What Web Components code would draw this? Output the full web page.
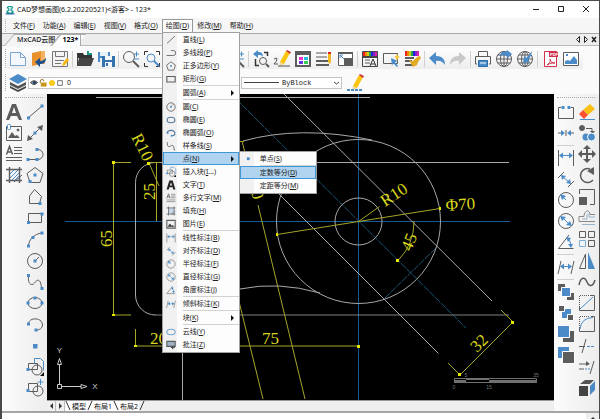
<!DOCTYPE html>
<html lang="zh-CN">
<head>
<meta charset="utf-8">
<title>CAD梦想画图</title>
<style>
  body {
    margin: 0;
    background: #39452a;
    font: 7px/10px "Noto Sans", "Noto Sans CJK SC", sans-serif;
    color: #222;
  }
</style>
</head>
<body>
<cad-window>
  <title-bar slot="top">CAD梦想画图(6.2.20220521)&lt;游客&gt; - 123*</title-bar>

  <menu-bar slot="top">
    <menu-item>文件(<u>F</u>)</menu-item>
    <menu-item>功能(<u>A</u>)</menu-item>
    <menu-item>编辑(<u>E</u>)</menu-item>
    <menu-item>视图(<u>V</u>)</menu-item>
    <menu-item>格式(<u>O</u>)</menu-item>
    <menu-item open>绘图(<u>D</u>)
      <menu-popup slot="popup">
        <menu-entry icon="mLine">直线(<u>L</u>)</menu-entry>
        <menu-entry icon="mPline">多线段(<u>P</u>)</menu-entry>
        <menu-entry icon="mPolygon">正多边形(<u>Y</u>)</menu-entry>
        <menu-entry icon="mRect">矩形(<u>G</u>)</menu-entry>
        <menu-line></menu-line>
        <menu-entry more>圆弧(<u>A</u>)</menu-entry>
        <menu-line></menu-line>
        <menu-entry icon="mCircle">圆(<u>C</u>)</menu-entry>
        <menu-entry icon="mEllipse">椭圆(<u>E</u>)</menu-entry>
        <menu-entry icon="mEllArc">椭圆弧(<u>O</u>)</menu-entry>
        <menu-entry icon="mSpline">样条线(<u>S</u>)</menu-entry>
        <menu-entry more active>点(<u>N</u>)
          <menu-popup slot="popup">
            <menu-entry icon="mPoint">单点(<u>S</u>)</menu-entry>
            <menu-line></menu-line>
            <menu-entry active>定数等分(<u>D</u>)</menu-entry>
            <menu-entry>定距等分(<u>M</u>)</menu-entry>
          </menu-popup>
        </menu-entry>
        <menu-entry icon="insertBlock">插入块(<u>I</u>...)</menu-entry>
        <menu-entry icon="mText">文字(<u>T</u>)</menu-entry>
        <menu-entry icon="mtext">多行文字(<u>M</u>)</menu-entry>
        <menu-entry icon="hatch">填充(<u>H</u>)</menu-entry>
        <menu-entry icon="mImage">图片(<u>E</u>)</menu-entry>
        <menu-line></menu-line>
        <menu-entry icon="dimLinear">线性标注(<u>B</u>)</menu-entry>
        <menu-entry icon="dimAligned">对齐标注(<u>D</u>)</menu-entry>
        <menu-entry icon="dimRadius">半径标注(<u>F</u>)</menu-entry>
        <menu-entry icon="dimDiameter">直径标注(<u>G</u>)</menu-entry>
        <menu-entry icon="dimAngle">角度标注(<u>J</u>)</menu-entry>
        <menu-line></menu-line>
        <menu-entry icon="dimOblique">倾斜标注(<u>K</u>)</menu-entry>
        <menu-line></menu-line>
        <menu-entry more>块(<u>K</u>)</menu-entry>
        <menu-line></menu-line>
        <menu-entry icon="mCloud">云线(<u>Y</u>)</menu-entry>
        <menu-entry icon="mNote">批注(<u>Z</u>)</menu-entry>
      </menu-popup>
    </menu-item>
    <menu-item>修改(<u>M</u>)</menu-item>
    <menu-item>帮助(<u>H</u>)</menu-item>
  </menu-bar>

  <doc-tabs slot="top">
    <doc-tab>MxCAD云图</doc-tab>
    <doc-tab active>123*</doc-tab>
  </doc-tabs>

  <tool-strip slot="top">
    <tool-button icon="fileNew" label="新建"></tool-button>
    <tool-button icon="fileOpen" label="打开"></tool-button>
    <tool-button icon="saveEdit" label="保存"></tool-button>
    <tool-sep></tool-sep>
    <tool-button icon="folder" label="打开目录"></tool-button>
    <tool-button icon="saveAll" label="全部保存"></tool-button>
    <tool-sep></tool-sep>
    <tool-button icon="zoomPm" label="缩放"></tool-button>
    <tool-button icon="zoomWin" label="窗口缩放"></tool-button>
    <tool-button icon="zoomPm" label="放大"></tool-button>
    <tool-button icon="zoomPm" label="缩小"></tool-button>
    <tool-button icon="zoomWin" label="全图"></tool-button>
    <tool-button icon="zoomPm" label="实时缩放"></tool-button>
    <tool-sep></tool-sep>
    <tool-button icon="zoomPrev" label="上一视图"></tool-button>
    <tool-button icon="pencil" label="编辑"></tool-button>
    <tool-button icon="colors" label="颜色"></tool-button>
    <tool-button icon="lineEdit" label="线型"></tool-button>
    <tool-button icon="viewScale" label="比例"></tool-button>
    <tool-sep></tool-sep>
    <tool-button icon="textStyle" label="文字样式"></tool-button>
    <tool-button icon="quickPick" label="快速选择"></tool-button>
    <tool-button icon="matchProp" label="格式刷"></tool-button>
    <tool-sep></tool-sep>
    <tool-button icon="undo" label="撤销"></tool-button>
    <tool-button icon="redo" label="重做"></tool-button>
    <tool-sep></tool-sep>
    <tool-button icon="print" label="打印"></tool-button>
    <tool-button icon="webUp" label="上传"></tool-button>
    <tool-button icon="webDown" label="下载"></tool-button>
    <tool-sep></tool-sep>
    <tool-button icon="pdf" label="导出PDF"></tool-button>
    <tool-button icon="exportImg" label="导出图片"></tool-button>
  </tool-strip>

  <tool-strip slot="top" plain>
    <tool-button icon="layers" label="图层"></tool-button>
    <layer-select></layer-select>
    <linetype-select></linetype-select>
    <tool-button icon="pencilLine" label="线型管理"></tool-button>
  </tool-strip>

  <side-panel slot="left">
    <tool-button slot="first" icon="textA" label="文字"></tool-button>
    <tool-button slot="first" icon="picture" label="图片"></tool-button>
    <tool-button slot="first" icon="mtext" label="多行文字"></tool-button>
    <tool-button slot="first" icon="hatch" label="填充"></tool-button>
    <tool-button slot="second" icon="line" label="直线"></tool-button>
    <tool-button slot="second" icon="xline" label="构造线"></tool-button>
    <tool-button slot="second" icon="pline" label="多线段"></tool-button>
    <tool-button slot="second" icon="polygon" label="正多边形"></tool-button>
    <tool-button slot="second" icon="shape" label="多边形"></tool-button>
    <tool-button slot="second" icon="rect" label="矩形"></tool-button>
    <tool-button slot="second" icon="arc" label="圆弧"></tool-button>
    <tool-button slot="second" icon="circle" label="圆"></tool-button>
    <tool-button slot="second" icon="spline" label="样条线"></tool-button>
    <tool-button slot="second" icon="ellipse" label="椭圆"></tool-button>
    <tool-button slot="second" icon="ellArc" label="椭圆弧"></tool-button>
    <tool-button slot="second" icon="point" label="点"></tool-button>
    <tool-button slot="second" icon="insertBlock" label="插入块"></tool-button>
    <tool-button slot="second" icon="makeBlock" label="创建块"></tool-button>
  </side-panel>

  <drawing-view></drawing-view>
  <sheet-tabs slot="sheets"></sheet-tabs>

  <side-panel slot="right">
    <tool-button slot="first" icon="breakPt" label="打断"></tool-button>
    <tool-button slot="first" icon="join" label="合并"></tool-button>
    <tool-sep slot="first" across></tool-sep>
    <tool-button slot="first" icon="dimLinear" label="线性标注"></tool-button>
    <tool-button slot="first" icon="dimAligned" label="对齐标注"></tool-button>
    <tool-button slot="first" icon="dimRadius" label="半径标注"></tool-button>
    <tool-button slot="first" icon="dimDiameter" label="直径标注"></tool-button>
    <tool-button slot="first" icon="dimAngle" label="角度标注"></tool-button>
    <tool-sep slot="first" across></tool-sep>
    <tool-button slot="first" icon="dimOblique" label="倾斜标注"></tool-button>
    <tool-sep slot="first" across></tool-sep>
    <tool-button slot="first" icon="order1" label="前置"></tool-button>
    <tool-button slot="first" icon="order2" label="后置"></tool-button>
    <tool-button slot="first" icon="order3" label="置于对象之上"></tool-button>
    <tool-button slot="first" icon="order4" label="置于对象之下"></tool-button>
    <tool-button slot="second" icon="erase" label="删除"></tool-button>
    <tool-button slot="second" icon="copy" label="复制"></tool-button>
    <tool-button slot="second" icon="move" label="移动"></tool-button>
    <tool-button slot="second" icon="rotate" label="旋转"></tool-button>
    <tool-button slot="second" icon="scale" label="缩放"></tool-button>
    <tool-button slot="second" icon="offset" label="偏移"></tool-button>
    <tool-button slot="second" icon="array" label="阵列"></tool-button>
    <tool-button slot="second" icon="mirror" label="镜像"></tool-button>
    <tool-button slot="second" icon="wave" label="光顺"></tool-button>
    <tool-button slot="second" icon="chamfer" label="倒角"></tool-button>
    <tool-button slot="second" icon="fillet" label="圆角"></tool-button>
    <tool-button slot="second" icon="trim" label="修剪"></tool-button>
    <tool-button slot="second" icon="extend" label="延伸"></tool-button>
    <tool-button slot="second" icon="explode" label="分解"></tool-button>
  </side-panel>
</cad-window>

<script>
// shared icon colours
const G = "#5c5c5c";
const B = "#4b8cc8";

// small blue grip square centred on x,y
const dot = (x, y) => `<rect x="${x - 1.5}" y="${y - 1.5}" width="3" height="3" fill="${B}" stroke="none"/>`;
const fill = (d, c = G) => `<path d="${d}" fill="${c}" stroke="none"/>`;
const blue = (d) => `<path d="${d}" stroke="${B}"/>`;
const pen = `<path d="M7 12 13 1l4 2-6 11-4 2z" fill="#fbc40e" stroke="none"/><path d="M13 1l1-1 4 2-1 2z" fill="#c8323c" stroke="none"/><path d="M7 12l4 2-5 3z" fill="#f0d9a8" stroke="none"/>`;
const rainbow = ["#e22", "#e80", "#cc2", "#2a4", "#22d", "#82c", "#d2a"]
  .map((c, i) => `<rect x="${2 + i * 2}" y="1" width="2" height="5" fill="${c}" stroke="none"/>`).join("");
const globe = `<circle cx="9" cy="9" r="7.5"/><ellipse cx="9" cy="9" rx="3.5" ry="7.5"/><path d="M9 1.5v15M1.5 9h15M3 5h12M3 13h12"/>`;

const icons = {
  logo: fill("M5 2h8l2 3-3 3 4 4-2 4H4l-2-4 4-4-3-3z", "#1a9c94") + `<path d="M6 5h6M6 12h6M9 4v10" stroke="#fff" stroke-width="2"/>` + fill("M1 15h16v2H1z", "#2b5fa5"),
  fileNew: `<path d="M1.500 2.500h10l5 5v8h-15z" fill="#f4f8fd" stroke="#7ba4d0"/><path d="M11.500 2.500v5h5" stroke="#7ba4d0"/>`,
  fileOpen: fill("M2 3l9-2v13l-9 2z", "#e8922c") + fill("M11 1h4v13h-4z", "#f3b465") + fill("M16 8c0 5-3 6-6 6v3l-5-5 5-4v3c3 0 4-1 6-3z", "#1d4f8c"),
  saveEdit: `<path d="M1.500 1.500h15v15h-15z" stroke="#777" fill="#f4f4f4"/><path d="M4.500 1.500v5h9v-5M4 10.500h9M4 13.500h6" stroke="#777"/><path d="M11 16l1-3 4-5 2 2-4 5z" fill="#f6b50e" stroke="none"/>`,
  folder: fill("M1 3h6l1 2h8v3H1z", "#333") + fill("M11 1h2v2h3v2h-5z", "#1b9a8a") + fill("M3 8h15l-3 8H1z", "#444") + fill("M1 5h1v11H1z", "#444"),
  saveAll: fill("M1 2h12v10H1z", B) + fill("M3 2h8v4H3zM3 8h5v4H3z", "#e8f0f8") + fill("M5 6h13v11H5z", "#3573ae") + fill("M8 6h7v4H8zM8 12h7v5H8z", "#f2f6fa") + fill("M9 13h2v3H9z", "#3573ae"),
  zoomPm: `<circle cx="7" cy="7" r="5.500"/><path d="M11 11l6 6" stroke-width="2"/><path d="M12 4h5M14.500 1.500v5M12 9h5" stroke="${B}"/>`,
  zoomWin: `<path d="M1.500 5V1.500H5M13 1.500h3.500V5M16.500 13v3.500H13M5 16.500H1.500V13" stroke="#333"/><circle cx="8" cy="8" r="4" stroke="${B}"/><path d="M11 11l5 5" stroke="${B}" stroke-width="2"/>`,
  zoomPrev: fill("M1 4l5-4v2c4 0 5 2 5 5-1-2-3-2-5-2v3z", B) + `<path d="M12 2.500h3.500V6M3.500 9v6.500H7" stroke="#333" stroke-width="1.500"/><circle cx="11" cy="11" r="3.500"/><path d="M14 14l3 3" stroke-width="2"/>`,
  pencil: pen + `<path d="M1 9q3-2 3 0t-3 5h4M5 16h12" stroke="#555"/>`,
  colors: `<rect x="2" y="2" width="14" height="14" fill="#fff" stroke-width="2"/>` + fill("M2 2h14v3H2z") + fill("M5 7h4v3H5z", "#e3c") + fill("M10 7h4v3h-4z", "#22b8e0") + fill("M5 11h4v3H5z", "#63d") + fill("M10 11h4v3h-4z", "#3c5"),
  lineEdit: `<path d="M1 3h11M1 7h11M1 15h13" stroke-width="1"/><path d="M1 11h12" stroke-width="2"/><path d="M1 15h13" stroke-width="2"/>` + fill("M13 4h3v8l-1.500 2L13 12z", "#f3bb23") + fill("M13 2h3v2h-3z", "#d22"),
  viewScale: `<path d="M2.500 2.500h14v13h-14z" fill="#fff"/>` + fill("M8 8h9v8H8z") + blue("M4 5l4 4M4 8V5h3") + fill("M2 2h15v2H2z"),
  textStyle: rainbow + `<path d="M1.500 1.500h15v15h-15z" stroke="#444"/>` + fill("M1 6h16v2H1z", "#444") + `<path d="M4 10h5M4 13h5"/><path d="M9 16l3-7 3 7M10 14h4" stroke="#333"/>`,
  quickPick: `<path d="M1.500 3.500h14v10h-14z"/>` + fill("M9 8l7 3-3 1 3 4-1 1-4-4-1 3z", B) + fill("M15 4l1 2 2 1-2 1-1 3-1-3-2-1 2-1z", "#f7c534"),
  matchProp: rainbow + `<path d="M2 8h9M2 11h7M2 15h8" stroke-width="2"/>` + fill("M6 10l4 1 4-4 3-1 1 2-3 4-1 3-4 2z", "#e3aa24"),
  undo: fill("M1 8l7-6v4c6 0 9 3 9 9-2-3-5-5-9-4v4z", B),
  redo: fill("M17 8l-7-6v4c-6 0-9 3-9 9 2-3 5-5 9-4v4z", "#c9c9c9"),
  print: `<path d="M4.500 6V1.500h9V6M3 14H1.500V6.500h15V14H15"/><path d="M4.500 10.500h9v6h-9z" fill="${B}" stroke="#2f6da8"/><path d="M6 13h6" stroke="#fff"/>`,
  webUp: globe + fill("M4 6c2-4 5-5 7-4l1-2 5 4-4 4-1-2c-3-1-5-1-8 0z", B),
  webDown: globe + fill("M16 1c-1 5-2 7-4 9l2 2-7 1 1-7 2 2c2-2 4-4 6-7z", B),
  pdf: `<path d="M3.500 1.500h12v15h-12z" fill="#fff" stroke="#cf2f4b"/>` + fill("M8 2h9v5H8z", "#cf2f4b") + `<text x="9" y="6" font-size="4" font-weight="bold" fill="#fff" stroke="none">PDF</text><path d="M6 15c3-2 4-4 3-6 0 3 3 4 5 4-3 0-5 0-8 2" stroke="#cf2f4b"/>`,
  exportImg: `<path d="M1.500 2.500h15v13h-15z" fill="#fff"/><rect x="4" y="4" width="2" height="2" fill="${B}" stroke="none"/>` + fill("M3 14v-3l3-1 2 1 4-5 3 4v4z", B),
  layers: fill("M1 12l8 4 8-4v2l-8 4-8-4z", "#444") + fill("M1 8l8 4 8-4v3l-8 4-8-4z", "#555") + fill("M0 5l9-5 9 5-9 5z", B),
  pencilLine: pen + `<path d="M1 16h16" stroke="${B}" stroke-width="2" stroke-dasharray="3 1"/>`,

  // draw
  textA: fill("M1 17L7 1h4l6 16h-3l-2-4H6l-2 4zM7 10h4L9 4z", "#5c5c5c"),
  picture: `<path d="M1.500 2.500h15v14h-15z"/><circle cx="13" cy="6" r="1" fill="${G}"/>` + fill("M3 14l4-6 3 4 2-1 3 3z") + `<rect x="2.500" y=".5" width="3" height="5" rx="1" stroke="${B}" fill="#fff"/>`,
  mtext: `<path d="M1.500 9.500l3-8 3 8M3 7h4" stroke-width="1.500"/><path d="M9 2.500h8M9 5.500h8M9 8.500h8M1 12.500h16M1 15.500h16"/>`,
  hatch: `<path d="M4.500 1v16M14.500 1v16M1 3.500h16M1 14.500h16" stroke-width="1.400"/><path d="M5 8l4-4M5 12l8-8M7 14l7-7M10 14l4-4" stroke="${B}"/><path d="M9 16l8-7"/>`,
  line: `<path d="M2 15L16 3"/>` + dot(2.5, 15) + dot(16, 3),
  xline: `<path d="M3 15L15 3"/>` + fill("M1 17l1-6 5 4zM17 1l-1 6-5-4z") + dot(9, 9),
  pline: `<path d="M2 14.500h10a5 5 0 0 0 0-10"/>` + dot(2, 14.5) + dot(11, 14.5) + dot(11, 4.5),
  polygon: `<path d="M9 1.500l8 6-3 9H4l-3-9z"/>` + dot(9, 9) + dot(4, 15.5),
  shape: `<path d="M3.500 8l5-6.500 7 7-2 7h-10z"/>` + dot(14, 15.5),
  rect: `<path d="M2.500 4.500h13v9h-13z"/>` + dot(2.5, 13.5) + dot(16, 5),
  arc: `<path d="M2.500 16C3 9 8 4 16 3"/>` + dot(2.5, 16) + dot(7, 7.5) + dot(16, 3),
  circle: `<circle cx="9" cy="9" r="7.500"/><path d="M9 9l4-4"/>` + dot(9, 9),
  spline: `<path d="M2.500 3c-1 9 4 10 6 7s6-6 7 5"/>` + dot(2.5, 2.5) + dot(16, 15.5),
  ellipse: `<ellipse cx="9" cy="9" rx="7" ry="5.500"/>` + dot(2, 9) + dot(16, 9) + dot(9, 4),
  ellArc: `<path d="M2.500 9c0-7 14-7 14 1 0 3-3 5-6 5"/>` + dot(2.5, 9) + dot(10, 15),
  point: `<rect x="7" y="7" width="4.500" height="4.500" fill="${B}" stroke="none"/>`,
  insertBlock: `<path d="M8.500 5V.5h6l3 3v9" stroke="${B}"/><path d="M2.500 5.500h9v6h-9z"/><circle cx="11" cy="12" r="5"/>` + dot(2, 11.5) + fill("M18 14v4h-4z", "#111"),
  makeBlock: `<path d="M2.500 4.500h9v8h-9z"/><circle cx="12" cy="12" r="5"/>` + blue("M14.500 0v6M11.500 3h6") + dot(2, 11.5),

  // modify and dimension
  breakPt: `<path d="M4 4.500H1.500v11h15v-11H14"/>` + dot(6, 4.5) + dot(12, 4.5),
  join: `<path d="M1 9h4M13 9h4"/>` + fill("M4 6l4 3-4 3zM14 6l-4 3 4 3z", B) + `<path d="M9 6v6"/>`,
  dimLinear: `<path d="M1.500 1v16M16.500 1v16"/>` + blue("M3 6.500h12") + fill("M2 6.500l4-3v6zM16 6.500l-4-3v6z", B),
  dimAligned: `<path d="M1 8l6-6M11 17l6-6"/>` + blue("M5 6l8 7") + fill("M4 5l5 1-4 4zM14 14l-5-1 4-4z", B),
  dimRadius: `<circle cx="9" cy="9" r="7.500"/>` + blue("M9 9L5 5") + fill("M3 3l6 2-4 4z", B),
  dimDiameter: `<circle cx="9" cy="9" r="7.500"/>` + blue("M5 5l8 8") + fill("M3 4l6 1-4 4zM15 14l-6-1 4-4z", B),
  dimAngle: `<path d="M12 2L1.500 15.500h15"/>` + blue("M11 5q3 4 3 8") + fill("M9 4l5 1-3 4zM14 15l-3-4h5z", B),
  dimOblique: `<path d="M4 3L1 16M17 3l-3 13"/>` + blue("M5 8.500h9") + fill("M3 8.500l4-3v6zM15 8.500l-4-3v6z", B),
  order1: fill("M1 1h7v7H1zM10 10h7v7h-7z") + `<path d="M4.500 4.500h9v9h-9z" fill="${B}" stroke="#fff"/>`,
  order2: fill("M5 5h9v9H5z", B) + `<path d="M1.500 1.500h6v6h-6zM10.500 10.500h6v6h-6z" fill="${G}" stroke="#fff"/>`,
  order3: fill("M6 6h11v11H6z") + `<path d="M.5.5h12v12H.5z" fill="${B}" stroke="#fff"/>`,
  order4: fill("M1 1h11v11H1z", B) + `<path d="M5.500 5.500h12v12h-12z" fill="${G}" stroke="#fff"/>`,
  erase: fill("M5 7l7-6 5 5-7 6z", "#f9c013") + fill("M5 7l5 5-4 4-5-5z", "#fa5130") + blue("M2 16.500h15"),
  copy: `<circle cx="4" cy="4" r="2.500" fill="${G}"/><path d="M8 4.500h6v4"/>` + fill("M12 7h5l-2.500 3z") + `<circle cx="8" cy="13" r="3.500" fill="${B}" stroke="none"/><circle cx="13.500" cy="13" r="4" fill="${B}" stroke="#fff"/>`,
  move: `<path d="M9 3v12M3 9h12" stroke-width="2"/>` + fill("M9 0l4 4H5zM9 18l4-4H5zM0 9l4-4v8zM18 9l-4-4v8z"),
  rotate: `<path d="M12 3a7 7 0 1 0 3 11" stroke-width="1.500"/>` + fill("M16 1v8l-7-4z"),
  scale: `<path d="M1.500 6V1.500h15v15H12"/>` + fill("M1 9h8v8H1z"),
  offset: `<path d="M1 12.500V7.500h5c0-7 6-7 6-2h5M1 12.500h16" stroke="#888"/><path d="M4 10h5V6c1-2 2-1 2 0v2h6M4 15.500h13" stroke="#9ab4cb"/>`,
  array: `<path d="M1.500 1.500h6v6h-6zM10.500 1.500h6v6h-6zM10.500 10.500h6v6h-6z"/><path d="M1.500 10.500h6v6h-6z" stroke="#7fb0d8"/>`,
  mirror: `<path d="M7.500 2v14.500h-6z"/>` + fill("M10 0l7 17h-7z", B),
  wave: `<path d="M1 12c2-9 6-8 8-3s6 5 8-2" stroke-width="1.500"/>`,
  chamfer: `<path d="M12 1.500h4.500v15h-15V13"/><path d="M1.500 13V1.500H12" stroke-dasharray="1 1"/>` + blue("M2 15L15 3"),
  fillet: `<path d="M13 1.500h3.500v15h-15V13"/><path d="M1.500 13V1.500H12" stroke-dasharray="1 1"/>` + blue("M2 14Q3 3 15 2.500"),
  trim: `<path d="M1 9.500h6M4 16L8 2"/><path d="M9 9.500h8" stroke="${B}" stroke-dasharray="3 1"/>`,
  extend: `<path d="M1 6h9M1 11h5M12 16l4-13"/>` + fill("M8 3l4 3-4 2z") + `<path d="M7 11h6" stroke="${B}" stroke-dasharray="2 1"/>`,
  explode: fill("M1 7h9v10H1z", "#444") + fill("M2 5l5-4h9l-4 4z", "#555") + fill("M12 7l5-5v9l-5 5z", B),

  // menu versions, lighter than the panel ones
  mLine: `<path d="M2 15L16 2" stroke-width="1.500"/>`,
  mPline: `<path d="M1 13.500h12a4 4 0 0 0 0-9H9" stroke-width="1.500"/>`,
  mPolygon: `<path d="M9 1.500l8 6-3 9H4l-3-9z" stroke-width="1.500"/>` + dot(9, 9),
  mRect: `<path d="M1.500 4.500h15v10h-15z" stroke-width="2"/>`,
  mCircle: `<circle cx="9" cy="9" r="7.500" stroke-width="1.500"/><path d="M8 9l5-5"/>` + dot(9, 9),
  mEllipse: `<ellipse cx="9" cy="9" rx="7" ry="5" stroke="#58779a" stroke-width="2"/>`,
  mEllArc: `<path d="M2 9c0-7 15-6 14 1 0 3-3 4-5 4" stroke="#58779a" stroke-width="2"/>` + dot(10, 14) + dot(3, 9),
  mSpline: `<path d="M2.500 2c-1 9 3 9 6 7s6-2 6 7h2" stroke-width="1.500"/>`,
  mPoint: `<rect x="7" y="6" width="5" height="5" fill="${B}" stroke="none"/>`,
  mText: fill("M1 17L6 1h6l5 16h-4l-1-4H6l-1 4zM7 10h4L9 4z", "#222"),
  mImage: `<path d="M1.500 2.500h15v14h-15z" stroke-width="2"/>` + fill("M3 14l4-6 3 4 2-1 3 3z", "#333"),
  mCloud: `<ellipse cx="9" cy="9" rx="7.500" ry="5" stroke="#7ba5cf" stroke-width="2"/>`,
  mNote: `<path d="M1.500 2.500h15v9h-15z" fill="#9db2c6" stroke-width="2"/>` + fill("M8 12h8v2h-3v3z", "#333"),

  // layer state
  eye: `<path d="M1 8q8-8 16 0q-8 9-16 0z" fill="#8fa9c4" stroke="#333" stroke-width="2"/><circle cx="10" cy="8" r="3.500" fill="#1d3c63"/>`,
  lock: `<path d="M3 9V5q0-4 4-4t4 4" stroke="#8a6a16" stroke-width="2"/>` + fill("M4 8h13v9H4z", "#c8961e"),
  sun: `<circle cx="9" cy="9" r="6" fill="#fcd116" stroke="#f0a800" stroke-width="2" stroke-dasharray="3 2"/>`,
  box: `<path d="M2 2h14v14H2z" fill="#fff" stroke="#333" stroke-width="2"/>`,
};

function define(name, html, setup) {
  const template = document.createElement("template");
  template.innerHTML = html;
  customElements.define(name, class extends HTMLElement {
    constructor() {
      super();
      this.attachShadow({ mode: "open" });
      this.shadowRoot.appendChild(template.content.cloneNode(true));
      if (setup) setup(this, this.shadowRoot);
    }
  });
}

define("cad-icon", `
  <style>
    :host { display: block; width: 18px; height: 18px; flex: none; }
    svg { display: block; width: 100%; height: 100%; overflow: visible; }
  </style>
  <svg viewBox="0 0 18 18" fill="none" stroke="${G}" aria-hidden="true"></svg>
`, (el, root) => {
  root.querySelector("svg").innerHTML = icons[el.getAttribute("name")] || "";
});

define("cad-window", `
  <style>
    :host {
      display: flex;
      flex-direction: column;
      min-height: 100vh;
      box-sizing: border-box;
      border: solid #4a4b48;
      border-width: 1px 1px 0 2px;
      background: #f6f6f6;
    }
    .work { display: flex; flex: 1; }
    .view { display: flex; flex-direction: column; flex: 1; min-width: 0; }
    .command {
      display: flex;
      justify-content: flex-end;
      height: 6px;
      overflow: hidden;
      border-top: 2px solid #a5a5a5;
      background: #fff;
    }
    .command button { width: 13px; height: 12px; padding: 0; border: 0; background: #eee; }
    .command svg { display: block; margin: 1px auto; }
  </style>
  <slot name="top"></slot>
  <div class="work">
    <slot name="left"></slot>
    <div class="view">
      <slot></slot>
      <slot name="sheets"></slot>
    </div>
    <slot name="right"></slot>
  </div>
  <div class="command">
    <button aria-label="向上滚动"><svg width="8" height="5" fill="none" stroke="#444" stroke-width="1.500"><path d="M1 4l3-3 3 3"/></svg></button>
  </div>
`);

define("title-bar", `
  <style>
    :host { display: flex; align-items: center; height: 17px; padding-left: 3px; background: #fff; color: #111; }
    cad-icon { width: 10px; height: 10px; margin-right: 2px; }
    .name { flex: 1; white-space: nowrap; }
    button { width: 25px; height: 17px; padding: 0; border: 0; background: none; }
    svg { display: block; margin: auto; }
  </style>
  <cad-icon name="logo"></cad-icon>
  <span class="name"><slot></slot></span>
  <button aria-label="最小化"><svg width="7" height="7" stroke="#222"><path d="M0 3.500h6"/></svg></button>
  <button aria-label="最大化"><svg width="7" height="7" fill="none" stroke="#222"><path d="M.5.5h5v5h-5z"/></svg></button>
  <button aria-label="关闭"><svg width="7" height="7" stroke="#222"><path d="M0 0l6 6M6 0L0 6"/></svg></button>
`);

define("menu-bar", `
  <style>
    :host { display: flex; height: 15px; box-sizing: border-box; padding: 1px 0 1px 3px; background: #f6f6f6; }
    .grip { width: 3px; border-left: 1px dotted #b5b5b5; }
  </style>
  <span class="grip"></span>
  <slot></slot>
`);

define("menu-item", `
  <style>
    :host { display: block; position: relative; white-space: nowrap; }
    button {
      height: 13px;
      padding: 0 3px;
      border: 1px solid transparent;
      border-bottom: 0;
      background: none;
      font: inherit;
      color: inherit;
    }
    :host([open]) button { background: #fdfdfd; border-color: #999; }
    ::slotted(menu-popup) { top: 100%; left: 0; }
  </style>
  <button><slot></slot></button>
  <slot name="popup"></slot>
`);

define("menu-popup", `
  <style>
    :host {
      display: block;
      position: absolute;
      z-index: 5;
      width: 76px;
      padding-bottom: 1px;
      border: 1px solid #a0a0a0;
      background: linear-gradient(90deg, #f1f1f1 14px, #fdfdfd 14px);
    }
  </style>
  <slot></slot>
`);

define("menu-entry", `
  <style>
    :host { display: block; position: relative; height: 13px; white-space: nowrap; }
    button {
      display: flex;
      align-items: center;
      width: 100%;
      height: 13px;
      padding: 0 4px 0 2px;
      border: 1px solid transparent;
      background: none;
      font: inherit;
      color: inherit;
      text-align: left;
    }
    cad-icon { width: 10px; height: 10px; margin-right: 7px; }
    .text { flex: 1; }
    .arrow { display: none; }
    :host([more]) .arrow { display: block; fill: #111; }
    :host([active]) button { background: #b0d3f0; border-color: #3f97d6; }
    ::slotted(menu-popup) { top: -1px; left: 100%; }
  </style>
  <button><span class="text"><slot></slot></span><svg class="arrow" width="3" height="6"><path d="M0 0l3 3-3 3z"/></svg></button>
  <slot name="popup"></slot>
`, (el, root) => {
  const icon = document.createElement("template");
  icon.innerHTML = `<cad-icon name="${el.getAttribute("icon") || ""}"></cad-icon>`;
  root.querySelector("button").prepend(icon.content);
});

define("menu-line", `
  <style>:host { display: block; height: 1px; margin-left: 20px; background: #d2d2d2; }</style>
`);

define("doc-tabs", `
  <style>
    :host {
      display: flex;
      align-items: flex-end;
      height: 13px;
      box-sizing: border-box;
      padding: 0 2px 0 7px;
      border-top: 1px solid #a8a8a8;
      border-bottom: 1px solid #bbb;
      background: #ededed;
    }
    nav { display: flex; gap: 2px; margin-left: auto; }
    nav button { width: 6px; height: 11px; padding: 0; border: 0; background: none; }
    svg { display: block; fill: none; stroke: #222; }
  </style>
  <slot></slot>
  <nav>
    <button aria-label="上一个"><svg width="6" height="7"><path d="M4.500.500v6l-3-3z"/></svg></button>
    <button aria-label="下一个"><svg width="6" height="7"><path d="M1.500.500v6l3-3z"/></svg></button>
    <button aria-label="关闭标签"><svg width="6" height="7" stroke-width="1.500"><path d="M1 1l4 5M5 1L1 6"/></svg></button>
  </nav>
`);

define("doc-tab", `
  <style>
    :host { display: block; position: relative; z-index: 0; height: 11px; font-weight: 500; }
    button { height: 11px; padding: 0 1px 0 8px; border: 0; background: none; font: inherit; line-height: 10px; color: inherit; }
    :host([active]) button { padding: 0 3px 0 6px; }
    :host::before {
      content: "";
      position: absolute;
      z-index: -1;
      inset: 0 0 -1px 0;
      border: solid #aaa;
      border-width: 1px 1px 0 1px;
      background: #f4f4f4;
      transform: skewX(-40deg);
      transform-origin: left;
    }
    :host([active]) { font-weight: bold; color: #000; }
    :host([active])::before { background: #fdfdfd; border-right: 0; }
    :host([active])::after {
      content: "";
      position: absolute;
      z-index: -1;
      inset: 0 0 -1px 8px;
      border: solid #aaa;
      border-width: 1px 1px 0 0;
      background: #fdfdfd;
    }
  </style>
  <button><slot></slot></button>
`);

define("tool-strip", `
  <style>
    :host { display: flex; align-items: center; height: 25px; padding: 0 2px; background: #fafafa; }
    :host([plain]) { height: 23px; }
    .grip { align-self: stretch; margin: 3px 1px 3px 1px; border-left: 1px dotted #aaa; }
    .tools { display: flex; align-items: center; height: 21px; padding-right: 2px; background: linear-gradient(#fdfdfd, #eeeeee); }
    :host([plain]) .tools { background: none; }
  </style>
  <span class="grip"></span>
  <div class="tools"><slot></slot></div>
`);

define("tool-button", `
  <style>
    :host { display: block; width: 21px; }
    button {
      display: flex;
      align-items: center;
      justify-content: center;
      width: 100%;
      height: 21px;
      padding: 0;
      border: 0;
      background: none;
    }
  </style>
  <button></button>
`, (el, root) => {
  const button = root.querySelector("button");
  button.setAttribute("aria-label", el.getAttribute("label"));
  button.innerHTML = `<cad-icon name="${el.getAttribute("icon")}"></cad-icon>`;
});

define("tool-sep", `
  <style>
    :host { display: flex; justify-content: center; align-items: center; width: 4px; height: 18px; }
    :host([across]) { width: 21px; height: 4px; }
    i { width: 1px; height: 16px; background: #d0d0d0; }
    :host([across]) i { width: 17px; height: 1px; }
  </style>
  <i></i>
`);

const comboStyle = `
  :host { display: flex; align-items: center; height: 12px; box-sizing: border-box; border: 1px solid #c4c4c4; background: #fff; }
  label { display: flex; align-items: center; flex: 1; }
  select { flex: 1; min-width: 0; height: 10px; padding: 0; border: 0; appearance: none; background: none; font: inherit; color: #222; }
  svg { flex: none; fill: none; stroke: #444; }
`;

define("layer-select", `
  <style>
    ${comboStyle}
    :host { width: 150px; padding: 0 3px 0 1px; }
    label { gap: 1px; }
    cad-icon { width: 8px; height: 8px; }
    .box { width: 6px; height: 6px; }
    select { margin-left: 3px; }
  </style>
  <label aria-label="当前图层">
    <cad-icon name="eye"></cad-icon><cad-icon name="lock"></cad-icon><cad-icon name="sun"></cad-icon><cad-icon class="box" name="box"></cad-icon>
    <select><option>0</option></select>
  </label>
  <svg width="5" height="4"><path d="M0 1l2.500 2L5 1"/></svg>
`);

define("linetype-select", `
  <style>
    ${comboStyle}
    :host { width: 101px; margin: 0 2px 0 63px; padding: 0 2px; }
    label { gap: 3px; }
    select { font-family: "Liberation Mono", monospace; }
  </style>
  <label aria-label="线型">
    <svg width="35" height="1"><path d="M0 .5h35"/></svg>
    <select><option>ByBlock</option></select>
  </label>
  <svg width="5" height="4"><path d="M0 1l2.500 2L5 1"/></svg>
`);

define("side-panel", `
  <style>
    :host { display: block; width: 45px; padding: 3px 2px 12px 1px; box-sizing: border-box; background: linear-gradient(90deg, #fbfbfb, #ededed); }
    .grip { margin: 0 2px; height: 3px; border-top: 1px dotted #aaa; }
    .cols { display: flex; }
    .col { display: flex; flex-direction: column; width: 21px; }
    .second { display: grid; grid-auto-rows: 1fr; height: 298px; }
  </style>
  <div class="grip"></div>
  <div class="cols">
    <div class="col"><slot name="first"></slot></div>
    <div class="col second"><slot name="second"></slot></div>
  </div>
`);

define("drawing-view", `
  <style>
    :host { display: block; flex: 1; min-height: 0; overflow: hidden; background: #000; }
    svg { display: block; width: 100%; height: 306px; }
    g { fill: none; }
    .w { stroke: #a8a8a8; }
    .b { stroke: #17598f; }
    .dash { stroke: #1b5672; stroke-dasharray: 7 1; }
    .y { stroke: #a5a52a; }
    .tick { fill: #e6e600; }
    .dim { fill: #d8d81c; font: 17px "Liberation Serif", serif; }
    .gray { stroke: #707070; }
    .small { fill: #777; font: 5px "Liberation Sans", sans-serif; text-anchor: middle; }
    .ucs { stroke: #ccc; }
    .axis { fill: #ccc; font: 8px "Liberation Sans", sans-serif; text-anchor: middle; }
  </style>
  <svg viewBox="47 94 507 306" preserveAspectRatio="xMinYMin slice">
    <g class="b">
      <path d="M358.500 94v306M65 221.500h445"/>
      <path class="dash" d="M231 94L466 328M385 298l52-51"/>
    </g>
    <g class="w">
      <path d="M96 97.500h274M509 162.500H155.500a20 20 0 0 0-20 20V295a20 20 0 0 0 20 20M182.500 315v85"/>
      <path d="M155 315h354" stroke="#808080"/>
      <circle cx="358.500" cy="221.500" r="82"/>
      <circle cx="358.500" cy="221.500" r="23.500"/>
      <path d="M243 141Q300 125 372 140M240 289Q278 281 320 293"/>
      <path d="M284 94L492 301M200 115L438.500 353.500"/>
    </g>
    <g class="y">
      <path d="M131 162.500h-17.500V315H131M150 162.500h10M156.500 162v59"/>
      <path d="M149 163l10 23M358.500 221.500l21-15M277 234.500L440 208.500"/>
      <path d="M414 221a55.500 55.500 0 0 1-16 39.500"/>
      <path d="M448 363l12 12 53-53-12-12"/>
      <path d="M135.500 329v18M135.500 346h223"/>
      <path d="M239 141.500h5M242 141l4 16M258 205l47 194M232 273l31 126"/>
    </g>
    <path class="tick" d="M112 161h3v3h-3zM112 314h3v2h-3zM147 162h3v3h-3zM439 207h2v3h-2zM276 233h2v3h-2zM458 373h3v3h-3zM511 321h3v3h-3zM357 345h3v3h-3zM396 259h3v3h-3zM134 345h3v2h-3z"/>
    <g>
      <text class="dim" transform="translate(112 247) rotate(-90)">65</text>
      <text class="dim" transform="translate(155 200) rotate(-90)">25</text>
      <text class="dim" transform="translate(131 137) rotate(63)">R10</text>
      <text class="dim" transform="translate(385 207) rotate(-33)">R10</text>
      <text class="dim" transform="translate(446 211) rotate(-4)">Φ70</text>
      <text class="dim" transform="translate(411 252) rotate(-68)">45</text>
      <text class="dim" transform="translate(477 353) rotate(-45)">32</text>
      <text class="dim" transform="translate(251 192) rotate(76)">0</text>
      <text class="dim" x="262" y="344">75</text>
      <text class="dim" x="150" y="344">20</text>
    </g>
    <g class="ucs">
      <path d="M57.500 384.500h4v4h-4zM59.500 384v-20M62 386.500h19M59.500 358.500l2 6h-4zM87 386.500l-6-2v4z"/>
    </g>
    <text class="axis" x="59.500" y="353">Y</text>
    <text class="axis" x="95" y="389">X</text>
    <path class="gray" fill="none" d="M454.500 378.500h82v4h-82z"/>
    <path fill="#707070" d="M454 380h12v3h-12zM466 378h23v2h-23zM489 380h48v3h-48z"/>
    <text class="small" x="466" y="377">5</text>
    <text class="small" x="536" y="377">35</text>
    <text class="small" x="454" y="389">0</text>
    <text class="small" x="489" y="389">15</text>
  </svg>
`);

define("sheet-tabs", `
  <style>
    :host { display: flex; height: 10px; border-top: 1px solid #999; background: #efefef; }
    button { height: 10px; padding: 0; border: 0; background: none; font: inherit; line-height: 9px; color: #111; }
    .nav { width: 9px; border-right: 1px solid #bbb; }
    .nav svg { display: block; margin: auto; fill: #333; }
    .tab { padding: 0 1px; background: #fdfdfd; }
    .edge { width: 6px; background: #fdfdfd; fill: none; stroke: #333; }
    .end { background: none; }
  </style>
  <button class="nav" aria-label="向左"><svg width="3" height="6"><path d="M3 0v6L0 3z"/></svg></button>
  <button class="nav" aria-label="向右"><svg width="3" height="6"><path d="M0 0v6l3-3z"/></svg></button>
  <svg class="edge" width="6" height="10"><path d="M1 0l4 9"/></svg>
  <button class="tab">模型</button>
  <svg class="edge" width="6" height="10"><path d="M5 0L1 9"/></svg>
  <button class="tab">布局1</button>
  <svg class="edge" width="6" height="10"><path d="M1 0l4 9"/></svg>
  <button class="tab">布局2</button>
  <svg class="edge end" width="6" height="10"><path d="M5 0L1 9"/></svg>
`);
</script>
</body>
</html>
